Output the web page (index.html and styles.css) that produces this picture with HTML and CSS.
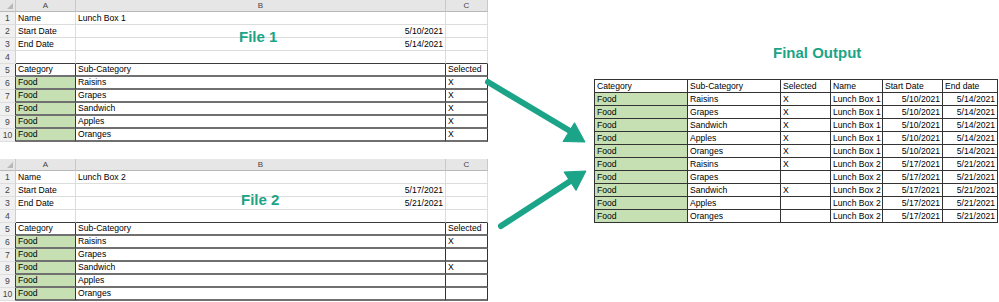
FILE: index.html
```html
<!DOCTYPE html>
<html>
<head>
<meta charset="utf-8">
<link rel="stylesheet" href="styles.css">
</head>
<body>
<div class="page">
  <div class="sheets">
    <div class="sheet">
      <div class="hdr corner"></div><div class="hdr">A</div><div class="hdr">B</div><div class="hdr">C</div>
      <div class="rn">1</div><div class="c">Name</div><div class="c">Lunch Box 1</div><div class="c"></div>
      <div class="rn">2</div><div class="c">Start Date</div><div class="c r">5/10/2021</div><div class="c"></div>
      <div class="rn">3</div><div class="c">End Date</div><div class="c r">5/14/2021</div><div class="c"></div>
      <div class="rn">4</div><div class="c top"></div><div class="c top"></div><div class="c top"></div>
      <div class="rn rnt">5</div><div class="t">Category</div><div class="t">Sub-Category</div><div class="t">Selected</div>
      <div class="rn rnt">6</div><div class="t g">Food</div><div class="t">Raisins</div><div class="t">X</div>
      <div class="rn rnt">7</div><div class="t g">Food</div><div class="t">Grapes</div><div class="t">X</div>
      <div class="rn rnt">8</div><div class="t g">Food</div><div class="t">Sandwich</div><div class="t">X</div>
      <div class="rn rnt">9</div><div class="t g">Food</div><div class="t">Apples</div><div class="t">X</div>
      <div class="rn rnt">10</div><div class="t g">Food</div><div class="t">Oranges</div><div class="t">X</div>
      <div class="title t1">File 1</div>
    </div>
    <div class="sheet">
      <div class="hdr corner"></div><div class="hdr">A</div><div class="hdr">B</div><div class="hdr">C</div>
      <div class="rn">1</div><div class="c">Name</div><div class="c">Lunch Box 2</div><div class="c"></div>
      <div class="rn">2</div><div class="c">Start Date</div><div class="c r">5/17/2021</div><div class="c"></div>
      <div class="rn">3</div><div class="c">End Date</div><div class="c r">5/21/2021</div><div class="c"></div>
      <div class="rn">4</div><div class="c top"></div><div class="c top"></div><div class="c top"></div>
      <div class="rn rnt">5</div><div class="t">Category</div><div class="t">Sub-Category</div><div class="t">Selected</div>
      <div class="rn rnt">6</div><div class="t g">Food</div><div class="t">Raisins</div><div class="t">X</div>
      <div class="rn rnt">7</div><div class="t g">Food</div><div class="t">Grapes</div><div class="t"></div>
      <div class="rn rnt">8</div><div class="t g">Food</div><div class="t">Sandwich</div><div class="t">X</div>
      <div class="rn rnt">9</div><div class="t g">Food</div><div class="t">Apples</div><div class="t"></div>
      <div class="rn rnt">10</div><div class="t g">Food</div><div class="t">Oranges</div><div class="t"></div>
      <div class="title t2">File 2</div>
    </div>
  </div>
  <div class="output">
    <div class="title otitle">Final Output</div>
    <div class="out">
      <div>Category</div><div>Sub-Category</div><div>Selected</div><div>Name</div><div>Start Date</div><div>End date</div>
      <div class="g">Food</div><div>Raisins</div><div>X</div><div>Lunch Box 1</div><div class="r">5/10/2021</div><div class="r">5/14/2021</div>
      <div class="g">Food</div><div>Grapes</div><div>X</div><div>Lunch Box 1</div><div class="r">5/10/2021</div><div class="r">5/14/2021</div>
      <div class="g">Food</div><div>Sandwich</div><div>X</div><div>Lunch Box 1</div><div class="r">5/10/2021</div><div class="r">5/14/2021</div>
      <div class="g">Food</div><div>Apples</div><div>X</div><div>Lunch Box 1</div><div class="r">5/10/2021</div><div class="r">5/14/2021</div>
      <div class="g">Food</div><div>Oranges</div><div>X</div><div>Lunch Box 1</div><div class="r">5/10/2021</div><div class="r">5/14/2021</div>
      <div class="g">Food</div><div>Raisins</div><div>X</div><div>Lunch Box 2</div><div class="r">5/17/2021</div><div class="r">5/21/2021</div>
      <div class="g">Food</div><div>Grapes</div><div></div><div>Lunch Box 2</div><div class="r">5/17/2021</div><div class="r">5/21/2021</div>
      <div class="g">Food</div><div>Sandwich</div><div>X</div><div>Lunch Box 2</div><div class="r">5/17/2021</div><div class="r">5/21/2021</div>
      <div class="g">Food</div><div>Apples</div><div></div><div>Lunch Box 2</div><div class="r">5/17/2021</div><div class="r">5/21/2021</div>
      <div class="g">Food</div><div>Oranges</div><div></div><div>Lunch Box 2</div><div class="r">5/17/2021</div><div class="r">5/21/2021</div>
    </div>
  </div>
  <svg class="arrows" width="999" height="302" viewBox="0 0 999 302">
    <g fill="#1ba487" stroke="#1ba487">
      <line x1="488" y1="82" x2="570" y2="131" stroke-width="6" stroke-linecap="round"/>
      <polygon points="574.5,122.7 585,142 563,141.5" stroke-width="1" stroke-linejoin="round"/>
      <line x1="501" y1="226" x2="572" y2="180" stroke-width="6" stroke-linecap="round"/>
      <polygon points="564,172 586,171 576,190.5" stroke-width="1" stroke-linejoin="round"/>
    </g>
  </svg>
</div>
</body>
</html>
```

FILE: styles.css
```css
* { box-sizing: border-box; }
html, body { margin: 0; padding: 0; background: #fff; }
body {
  font-family: "Liberation Sans", Arial, sans-serif;
  font-size: 8.6px;
  line-height: 12px;
  color: #000;
}
.page {
  position: relative;
  width: 999px;
  height: 302px;
  display: flex;
  overflow: hidden;
}
.sheets {
  display: flex;
  flex-direction: column;
  gap: 17px;
  width: 487px;
}
.sheet {
  position: relative;
  display: grid;
  grid-template-columns: 16px 60px 370px 42px;
  grid-template-rows: 12px;
  grid-auto-rows: 13px;
}
.hdr {
  background: #e6e6e6;
  border-right: 1px solid #c9c9c9;
  border-bottom: 1px solid #b9b9b9;
  text-align: center;
  color: #444;
  font-size: 8px;
  line-height: 11px;
}
.corner { position: relative; }
.corner::after {
  content: "";
  position: absolute;
  right: 2px;
  bottom: 2px;
  border-style: solid;
  border-width: 0 0 6px 6px;
  border-color: transparent transparent #b8b8b8 transparent;
}
.rn {
  background: #f0f0f0;
  border-right: 1px solid #cfcfcf;
  border-bottom: 1px solid #dedede;
  text-align: center;
  color: #444;
}
.rnt { border-right-color: #3a3a3a; }
.c {
  border-right: 1px solid #dcdcdc;
  border-bottom: 1px solid #dcdcdc;
  padding: 0 2px;
  white-space: nowrap;
}
.c.top { border-bottom-color: #3a3a3a; }
.r { text-align: right; }
.t {
  border-right: 1px solid #333;
  border-bottom: 2px solid #707070;
  padding: 0 2px;
  line-height: 11px;
  white-space: nowrap;
}
.g { background: #c6e0b4; }
.title {
  font-weight: bold;
  font-size: 15px;
  line-height: 17px;
  color: #1ba487;
  white-space: nowrap;
}
.t1 { position: absolute; left: 239px; top: 27.5px; }
.t2 { position: absolute; left: 241px; top: 31.5px; }
.output {
  margin-left: 107px;
  padding-top: 44px;
  display: flex;
  flex-direction: column;
  gap: 18px;
}
.otitle { padding-left: 179px; }
.out {
  display: grid;
  grid-template-columns: 93px 93px 50px 52px 60px 55px;
  grid-auto-rows: 13px;
  border-top: 1px solid #333;
  border-left: 1px solid #333;
  width: max-content;
}
.out > div {
  border-right: 1px solid #333;
  border-bottom: 1px solid #333;
  padding: 0 1px 0 2px;
  white-space: nowrap;
  overflow: hidden;
}
.out > .r { padding: 0 2px 0 1px; }
.arrows {
  position: absolute;
  left: 0;
  top: 0;
  pointer-events: none;
}
```
